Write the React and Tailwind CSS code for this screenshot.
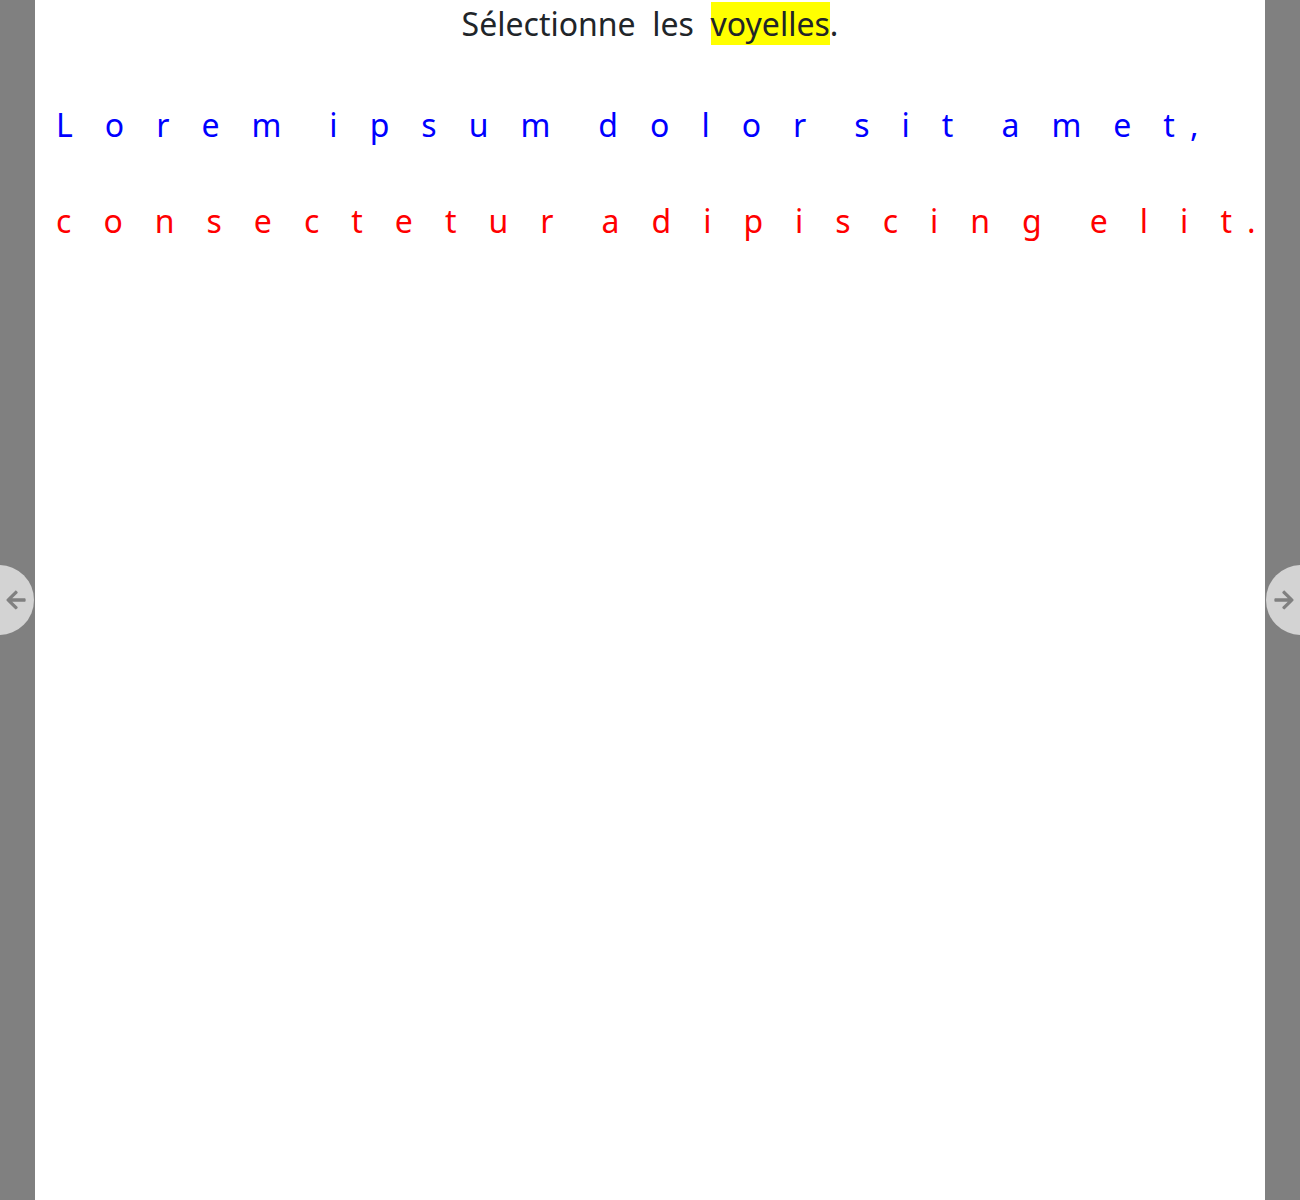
import { FaArrowLeft, FaArrowRight } from 'react-icons/fa'

const LINES = [
  { color: 'text-[#0000ff]', words: ['Lorem', 'ipsum', 'dolor', 'sit', 'amet,'] },
  { color: 'text-[#ff0000]', words: ['consectetur', 'adipiscing', 'elit.'] },
]

const isPunct = (ch) => ch === ',' || ch === '.'

const Letters = ({ line }) => (
  <div className={`flex whitespace-nowrap text-[32px] leading-[96px] ${line.color}`}>
    {line.words.map((w, i) => {
      const chars = w.split('')
      return (
        <span key={i} className="flex mr-[16px]">
          {chars.map((ch, j) => (
            <span key={j} className={isPunct(chars[j + 1]) ? 'mr-[15px]' : 'mr-[32px]'}>{ch}</span>
          ))}
        </span>
      )
    })}
  </div>
)

const App = () => {
  return (
    <div className="relative h-[1200px] overflow-hidden bg-[#808080] px-[35px] font-['Noto_Sans',sans-serif]">
      <div className="h-full bg-white px-[21px]">
        <h1 className="text-center text-[32px] text-[#212529] whitespace-pre">
          Sélectionne  les  <span className="bg-[#ffff00]">voyelles</span>.
        </h1>
        <div className="mt-[29px]">
          {LINES.map((line, i) => <Letters key={i} line={line} />)}
        </div>
      </div>

      {/* nav arrows */}
      <button className="absolute left-[-36px] top-[565px] flex h-[70px] w-[70px] items-center justify-end rounded-full bg-[#d3d3d3] pr-[7px] text-[#808080]">
        <FaArrowLeft size={22} />
      </button>
      <button className="absolute right-[-36px] top-[565px] flex h-[70px] w-[70px] items-center justify-start rounded-full bg-[#d3d3d3] pl-[7px] text-[#808080]">
        <FaArrowRight size={22} />
      </button>
    </div>
  )
}

export default App
